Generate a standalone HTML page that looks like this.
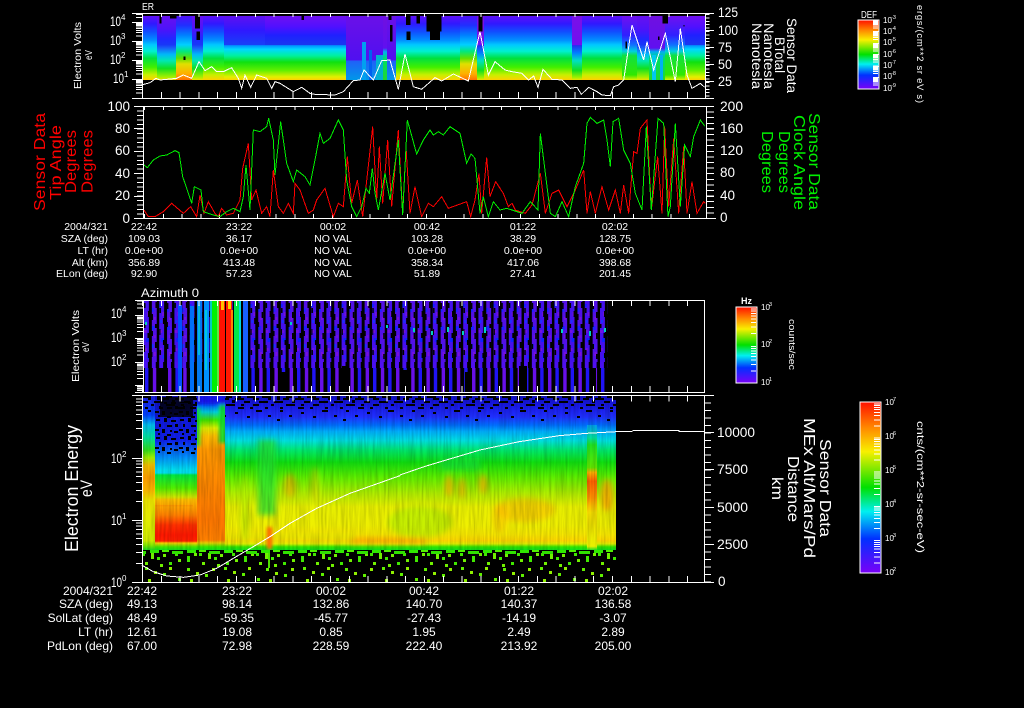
<!DOCTYPE html>
<html><head><meta charset="utf-8"><title>Sensor Data</title>
<style>
html,body{margin:0;padding:0;background:#000;width:1024px;height:708px;overflow:hidden}
svg{display:block;shape-rendering:crispEdges}
text{font-family:"Liberation Sans",sans-serif;fill:#fff}
.t10{font-size:10.5px}.t12{font-size:12px}.m{text-anchor:middle}.e{text-anchor:end}
.ax{font-size:13.5px}.ex{font-size:8px}.sm{font-size:8px}.xs{font-size:5.5px}
.r{fill:#f00}.g{fill:#00f000}
</style></head><body>
<svg width="1024" height="708" viewBox="0 0 1024 708" xmlns="http://www.w3.org/2000/svg">
<defs>
<linearGradient id="g1" x1="0" y1="0" x2="0" y2="1"><stop offset="0" stop-color="#6010f8"/><stop offset=".12" stop-color="#3018ff"/><stop offset=".25" stop-color="#1050ff"/><stop offset=".38" stop-color="#0090ff"/><stop offset=".45" stop-color="#00c8ff"/><stop offset=".55" stop-color="#00f0d0"/><stop offset=".66" stop-color="#00e040"/><stop offset=".8" stop-color="#40f000"/><stop offset=".92" stop-color="#c8f000"/><stop offset="1" stop-color="#ffd000"/></linearGradient>
<linearGradient id="g2" x1="0" y1="0" x2="0" y2="1"><stop offset="0" stop-color="#7010f0"/><stop offset=".17" stop-color="#5010ff"/><stop offset=".3" stop-color="#2020ff"/><stop offset=".45" stop-color="#1838f0"/><stop offset=".46" stop-color="#0090ff"/><stop offset=".52" stop-color="#00d8ff"/><stop offset=".62" stop-color="#00f0a0"/><stop offset=".72" stop-color="#10e010"/><stop offset=".85" stop-color="#60f000"/><stop offset=".95" stop-color="#e0f000"/><stop offset="1" stop-color="#ffd000"/></linearGradient>
<linearGradient id="g3" x1="0" y1="0" x2="0" y2="1"><stop offset="0" stop-color="#5010f8"/><stop offset=".15" stop-color="#2030ff"/><stop offset=".3" stop-color="#0080ff"/><stop offset=".45" stop-color="#00d0ff"/><stop offset=".55" stop-color="#00e880"/><stop offset=".66" stop-color="#60e000"/><stop offset=".75" stop-color="#e0e000"/><stop offset=".9" stop-color="#ffb000"/><stop offset="1" stop-color="#ff7000"/></linearGradient>
<linearGradient id="g4" x1="0" y1="0" x2="0" y2="1"><stop offset="0" stop-color="#6a10e8"/><stop offset=".69" stop-color="#5010f0"/><stop offset=".7" stop-color="#2060f8"/><stop offset="1" stop-color="#0098e8"/></linearGradient>
<linearGradient id="g5" x1="0" y1="0" x2="0" y2="1"><stop offset="0" stop-color="#6810f0"/><stop offset=".22" stop-color="#4a14fa"/><stop offset=".36" stop-color="#2028ff"/><stop offset=".45" stop-color="#1838f8"/><stop offset=".5" stop-color="#1860f8"/><stop offset=".6" stop-color="#00b8f8"/><stop offset=".7" stop-color="#00e8b0"/><stop offset=".82" stop-color="#10e020"/><stop offset=".95" stop-color="#a0f000"/><stop offset="1" stop-color="#f0e000"/></linearGradient>
<linearGradient id="g9" x1="0" y1="0" x2="0" y2="1"><stop offset="0" stop-color="#7a10e8"/><stop offset=".45" stop-color="#7010f0"/><stop offset=".46" stop-color="#2030f0"/><stop offset=".58" stop-color="#0080ff"/><stop offset=".7" stop-color="#00e0c0"/><stop offset=".85" stop-color="#10e020"/><stop offset=".96" stop-color="#a0f000"/><stop offset="1" stop-color="#f0e000"/></linearGradient>
<linearGradient id="g6" x1="0" y1="0" x2="0" y2="1"><stop offset="0" stop-color="#6010f0"/><stop offset=".22" stop-color="#3018ff"/><stop offset=".45" stop-color="#1840f8"/><stop offset=".46" stop-color="#0090ff"/><stop offset=".52" stop-color="#00d8ff"/><stop offset=".62" stop-color="#00f0a0"/><stop offset=".72" stop-color="#10e010"/><stop offset=".85" stop-color="#60f000"/><stop offset=".95" stop-color="#e0f000"/><stop offset="1" stop-color="#ffd000"/></linearGradient>
<linearGradient id="g7" x1="0" y1="0" x2="0" y2="1"><stop offset="0" stop-color="#7010f0"/><stop offset=".3" stop-color="#3020ff"/><stop offset=".45" stop-color="#1070ff"/><stop offset=".55" stop-color="#00d0e0"/><stop offset=".62" stop-color="#10e040"/><stop offset=".92" stop-color="#30e800"/><stop offset="1" stop-color="#e0f000"/></linearGradient>
<linearGradient id="g8" x1="0" y1="0" x2="0" y2="1"><stop offset="0" stop-color="#7010e0"/><stop offset=".5" stop-color="#6010f0"/><stop offset=".56" stop-color="#00b0f0"/><stop offset=".68" stop-color="#00e060"/><stop offset="1" stop-color="#20d830"/></linearGradient>

<linearGradient id="m" x1="0" y1="0" x2="0" y2="1"><stop offset="0" stop-color="#1010c0"/><stop offset=".06" stop-color="#1818e8"/><stop offset=".136" stop-color="#2030ff"/><stop offset=".19" stop-color="#0070ff"/><stop offset=".23" stop-color="#00b0ff"/><stop offset=".29" stop-color="#00e0e0"/><stop offset=".35" stop-color="#00e870"/><stop offset=".43" stop-color="#10e010"/><stop offset=".53" stop-color="#60f000"/><stop offset=".63" stop-color="#b0f000"/><stop offset=".72" stop-color="#e8f000"/><stop offset=".84" stop-color="#f0f000"/><stop offset=".9" stop-color="#f8e800"/><stop offset=".94" stop-color="#ffd800"/><stop offset=".96" stop-color="#e0f000"/><stop offset=".98" stop-color="#30e800"/><stop offset="1" stop-color="#10e020"/></linearGradient>
<linearGradient id="l" x1="0" y1="0" x2="0" y2="1"><stop offset="0" stop-color="#2020e0"/><stop offset=".123" stop-color="#0040ff"/><stop offset=".188" stop-color="#00c0f0"/><stop offset=".266" stop-color="#00e0a0"/><stop offset=".35" stop-color="#30e020"/><stop offset=".4" stop-color="#a0f000"/><stop offset=".448" stop-color="#f0c000"/><stop offset=".532" stop-color="#ffa000"/><stop offset=".61" stop-color="#ffb800"/><stop offset=".675" stop-color="#f0e800"/><stop offset=".94" stop-color="#d0f000"/><stop offset=".97" stop-color="#80f000"/><stop offset="1" stop-color="#20e020"/></linearGradient>
<linearGradient id="q" x1="0" y1="0" x2="0" y2="1"><stop offset="0" stop-color="#1010c0"/><stop offset=".286" stop-color="#1020f0"/><stop offset=".396" stop-color="#0090ff"/><stop offset=".48" stop-color="#00e0f0"/><stop offset=".5" stop-color="#00e0f0"/><stop offset=".513" stop-color="#00e840"/><stop offset=".597" stop-color="#50f000"/><stop offset=".656" stop-color="#d0e800"/><stop offset=".675" stop-color="#ffc000"/><stop offset=".773" stop-color="#ff8000"/><stop offset=".838" stop-color="#ff3000"/><stop offset=".903" stop-color="#ff1800"/><stop offset=".942" stop-color="#ff2000"/><stop offset=".955" stop-color="#f8d000"/><stop offset=".98" stop-color="#40e800"/><stop offset="1" stop-color="#10e020"/></linearGradient>
<linearGradient id="p" x1="0" y1="0" x2="0" y2="1"><stop offset="0" stop-color="#1010e0"/><stop offset=".058" stop-color="#0060ff"/><stop offset=".104" stop-color="#00d0e0"/><stop offset=".156" stop-color="#40e800"/><stop offset=".208" stop-color="#e0f000"/><stop offset=".26" stop-color="#ffc000"/><stop offset=".35" stop-color="#ff9800"/><stop offset=".805" stop-color="#ff7800"/><stop offset=".935" stop-color="#ff8000"/><stop offset=".955" stop-color="#e0d000"/><stop offset=".98" stop-color="#30e800"/><stop offset="1" stop-color="#10e020"/></linearGradient>
<linearGradient id="sp" x1="0" y1="0" x2="0" y2="1"><stop offset="0" stop-color="#00a0f0"/><stop offset=".1" stop-color="#00e0a0"/><stop offset=".16" stop-color="#20e020"/><stop offset=".34" stop-color="#60e800"/><stop offset=".38" stop-color="#ffb000"/><stop offset=".45" stop-color="#ff6000"/><stop offset=".58" stop-color="#ff9000"/><stop offset=".7" stop-color="#f8e000"/><stop offset=".97" stop-color="#e8f000"/><stop offset="1" stop-color="#20e020"/></linearGradient>
<linearGradient id="cb" x1="0" y1="0" x2="0" y2="1"><stop offset="0" stop-color="#ff1000"/><stop offset=".15" stop-color="#ff8800"/><stop offset=".29" stop-color="#f8f000"/><stop offset=".5" stop-color="#00e000"/><stop offset=".64" stop-color="#00f0f0"/><stop offset=".8" stop-color="#0030ff"/><stop offset="1" stop-color="#7a00f8"/></linearGradient>

<filter id="noise" x="0" y="0" width="100%" height="100%"><feTurbulence type="fractalNoise" baseFrequency="0.5 0.03" numOctaves="2" seed="4"/><feColorMatrix values="0 0 0 0 0  0 0 0 0 0  0 0 0 0 0  1.6 0 0 0 -.55"/></filter>
<filter id="bl" x="-50%" y="-50%" width="200%" height="200%"><feGaussianBlur stdDeviation="3"/></filter>
<filter id="bl2" x="-50%" y="-50%" width="200%" height="200%"><feGaussianBlur stdDeviation="1.5"/></filter>

<pattern id="st" patternUnits="userSpaceOnUse" x="144" y="300" width="15.2" height="92">
<rect x="0" y="0" width="5" height="62" fill="#4410ec"/><rect x="0" y="62" width="4" height="6" fill="#4810f0"/>
<rect x="1" y="68" width="3.5" height="24" fill="#2014f4"/>
<rect x="0" y="4" width="2" height="3" fill="#1020ff"/><rect x="3" y="12" width="2" height="4" fill="#7010e0"/><rect x="1" y="20" width="2" height="3" fill="#1a30ff"/><rect x="0" y="30" width="3" height="3" fill="#7010e0"/><rect x="2" y="38" width="3" height="4" fill="#1020ff"/><rect x="1" y="48" width="2" height="3" fill="#7010e0"/><rect x="3" y="55" width="2" height="4" fill="#2020ff"/>
<rect x="7.6" y="0" width="5" height="62" fill="#5210e6"/><rect x="8" y="62" width="4" height="6" fill="#5010f0"/>
<rect x="8.6" y="68" width="3.5" height="24" fill="#6810e8"/>
<rect x="8" y="8" width="2" height="4" fill="#2020ff"/><rect x="10" y="17" width="2" height="3" fill="#7a10dc"/><rect x="8" y="26" width="3" height="4" fill="#1a20ff"/><rect x="10" y="35" width="2" height="3" fill="#7010e0"/><rect x="8" y="44" width="2" height="4" fill="#1830ff"/><rect x="10" y="52" width="2" height="4" fill="#7a10dc"/>
</pattern>
<pattern id="nt" patternUnits="userSpaceOnUse" x="144" y="300" width="30.4" height="62">
<rect x="0" y="3" width="1.5" height="5" fill="#000"/><rect x="4" y="11" width="1.5" height="6" fill="#000"/><rect x="0" y="24" width="1.5" height="4" fill="#000"/><rect x="3.5" y="33" width="2" height="5" fill="#000"/><rect x="0" y="45" width="1" height="7" fill="#000"/><rect x="4" y="53" width="1.5" height="5" fill="#000"/>
<rect x="7.6" y="14" width="1.5" height="6" fill="#000"/><rect x="11.5" y="2" width="1.5" height="6" fill="#000"/><rect x="7.6" y="31" width="1.5" height="5" fill="#000"/><rect x="11" y="24" width="2" height="4" fill="#000"/><rect x="11" y="42" width="2" height="6" fill="#000"/><rect x="7.6" y="52" width="1" height="5" fill="#000"/>
<rect x="15.2" y="8" width="1.5" height="5" fill="#000"/><rect x="19" y="18" width="1.5" height="6" fill="#000"/><rect x="15.2" y="29" width="1" height="6" fill="#000"/><rect x="19" y="40" width="1.5" height="5" fill="#000"/><rect x="15.2" y="50" width="1.5" height="5" fill="#000"/>
<rect x="22.8" y="3" width="1.5" height="6" fill="#000"/><rect x="26.5" y="12" width="1.5" height="6" fill="#000"/><rect x="22.8" y="22" width="1" height="5" fill="#000"/><rect x="26.5" y="33" width="1.5" height="6" fill="#000"/><rect x="22.8" y="44" width="1.5" height="5" fill="#000"/><rect x="26.5" y="54" width="1.5" height="5" fill="#000"/>
</pattern>

<pattern id="sk1" patternUnits="userSpaceOnUse" x="142" y="396" width="60" height="14">
<rect x="0" y="0" width="9" height="2" fill="#000"/><rect x="15" y="0" width="3" height="4" fill="#000"/><rect x="24" y="0" width="6" height="2" fill="#000"/><rect x="36" y="0" width="3" height="2" fill="#000"/><rect x="45" y="0" width="9" height="2" fill="#000"/>
<rect x="6" y="2" width="3" height="2" fill="#000"/><rect x="21" y="2" width="6" height="2" fill="#000"/><rect x="33" y="2" width="9" height="2" fill="#000"/><rect x="51" y="2" width="6" height="2" fill="#000"/>
<rect x="0" y="5" width="6" height="2" fill="#000"/><rect x="12" y="5" width="9" height="2" fill="#000"/><rect x="30" y="4" width="3" height="3" fill="#000"/><rect x="42" y="5" width="6" height="2" fill="#000"/><rect x="57" y="5" width="3" height="2" fill="#000"/>
<rect x="9" y="8" width="3" height="2" fill="#000"/><rect x="24" y="8" width="9" height="2" fill="#000"/><rect x="39" y="8" width="3" height="2" fill="#000"/><rect x="51" y="8" width="6" height="2" fill="#000"/>
<rect x="3" y="11" width="3" height="2" fill="#000"/><rect x="18" y="11" width="3" height="2" fill="#000"/><rect x="36" y="11" width="6" height="2" fill="#000"/><rect x="48" y="11" width="3" height="2" fill="#000"/>
</pattern>
<pattern id="sk3" patternUnits="userSpaceOnUse" x="142" y="410" width="66" height="12">
<rect x="6" y="0" width="3" height="2" fill="#000"/><rect x="27" y="2" width="3" height="2" fill="#000"/><rect x="48" y="0" width="6" height="2" fill="#000"/><rect x="15" y="5" width="3" height="2" fill="#000"/><rect x="39" y="6" width="3" height="2" fill="#000"/><rect x="60" y="5" width="3" height="2" fill="#000"/><rect x="3" y="9" width="3" height="2" fill="#000"/>
</pattern>
<pattern id="sk2" patternUnits="userSpaceOnUse" x="155" y="400" width="24" height="18">
<rect x="1" y="1" width="4" height="2" fill="#000"/><rect x="9" y="0" width="3" height="4" fill="#000"/><rect x="16" y="2" width="5" height="2" fill="#000"/><rect x="4" y="6" width="2" height="3" fill="#000"/><rect x="12" y="7" width="5" height="2" fill="#000"/><rect x="20" y="6" width="3" height="3" fill="#000"/><rect x="0" y="11" width="4" height="2" fill="#000"/><rect x="7" y="11" width="3" height="4" fill="#000"/><rect x="15" y="12" width="2" height="2" fill="#000"/><rect x="19" y="13" width="4" height="2" fill="#000"/><rect x="3" y="15" width="2" height="2" fill="#000"/><rect x="12" y="16" width="4" height="2" fill="#000"/>
</pattern>

<pattern id="gs1" patternUnits="userSpaceOnUse" x="142" y="553" width="57" height="14">
<g fill="#40e800"><rect x="0" y="0" width="3" height="3"/><rect x="33" y="0" width="3" height="3"/><rect x="15" y="4" width="3" height="3"/><rect x="45" y="3" width="3" height="6"/><rect x="27" y="9" width="3" height="3"/></g>
<g fill="#70f000"><rect x="9" y="0" width="3" height="6"/><rect x="21" y="1" width="3" height="3"/><rect x="52" y="0" width="3" height="3"/><rect x="36" y="6" width="3" height="3"/><rect x="3" y="9" width="3" height="3"/><rect x="18" y="11" width="3" height="3"/></g>
</pattern>
<pattern id="gs3" patternUnits="userSpaceOnUse" x="142" y="567" width="79" height="15">
<g fill="#60f000"><rect x="3" y="0" width="3" height="3"/><rect x="45" y="1" width="3" height="3"/><rect x="21" y="6" width="3" height="3"/><rect x="63" y="7" width="3" height="3"/><rect x="36" y="11" width="3" height="3"/></g>
<g fill="#90f000"><rect x="27" y="0" width="3" height="3"/><rect x="70" y="1" width="3" height="3"/><rect x="12" y="4" width="3" height="3"/><rect x="54" y="5" width="3" height="3"/><rect x="6" y="12" width="3" height="3"/><rect x="48" y="12" width="3" height="3"/></g>
</pattern>
<pattern id="gs2" patternUnits="userSpaceOnUse" x="150" y="550" width="37" height="5">
<rect x="0" y="0" width="9" height="3" fill="#30e800"/><rect x="12" y="0" width="7" height="2" fill="#50f000"/><rect x="22" y="1" width="11" height="3" fill="#30e000"/>
</pattern>

<path id="d19" d="M136-5.7H142M136-9.1H142M136-11.4H142M136-13.3H142M136-14.8H142M136-16.1H142M136-17.2H142M136-18.1H142"/>
<path id="d23" d="M137-7.1H143M137-11.2H143M137-14.1H143M137-16.4H143M137-18.3H143M137-19.9H143M137-21.2H143M137-22.4H143"/>
<path id="d62" d="M136-18.7H142M136-29.6H142M136-37.3H142M136-43.3H142M136-48.2H142M136-52.4H142M136-56H142M136-59.2H142"/>
<path id="b11" d="M-5-3.4H0M-5-5.4H0M-5-6.8H0M-5-7.9H0M-5-8.8H0M-5-9.5H0M-5-10.2H0M-5-10.8H0"/>
<path id="b37" d="M-5-11.3H0M-5-17.9H0M-5-22.6H0M-5-26.2H0M-5-29.2H0M-5-31.7H0M-5-33.9H0M-5-35.8H0"/>
<path id="b34" d="M-6-10.2H0M-6-16.2H0M-6-20.5H0M-6-23.8H0M-6-26.5H0M-6-28.7H0M-6-30.7H0M-6-32.4H0"/>
</defs>

<rect width="1024" height="708" fill="#000"/>

<!-- PANEL 1 spectrogram -->
<g>
<rect x="142" y="16" width="15" height="64" fill="url(#g1)"/>
<rect x="157" y="16" width="19" height="64" fill="url(#g5)"/>
<rect x="176" y="16" width="16" height="64" fill="url(#g3)"/>
<rect x="192" y="16" width="11" height="64" fill="url(#g5)"/>
<rect x="203" y="16" width="21" height="64" fill="url(#g1)"/>
<rect x="224" y="16" width="41" height="64" fill="url(#g6)"/>
<rect x="265" y="16" width="81" height="64" fill="url(#g2)"/>
<rect x="346" y="16" width="37" height="64" fill="url(#g4)"/>
<rect x="362" y="42" width="4" height="38" fill="#00a0f0"/><rect x="369" y="50" width="3" height="30" fill="#0060f0"/><rect x="376" y="55" width="7" height="25" fill="#00b0d0"/>
<rect x="383" y="16" width="4" height="64" fill="url(#g8)"/>
<rect x="387" y="16" width="9" height="64" fill="url(#g4)"/>
<rect x="396" y="16" width="64" height="64" fill="url(#g1)"/>
<rect x="460" y="16" width="17" height="64" fill="url(#g3)"/>
<rect x="477" y="16" width="7" height="64" fill="url(#g9)"/>
<rect x="484" y="16" width="88" height="64" fill="url(#g1)"/>
<rect x="572" y="16" width="10" height="64" fill="url(#g9)"/>
<rect x="582" y="16" width="40" height="64" fill="url(#g1)"/>
<rect x="622" y="16" width="15" height="64" fill="url(#g7)"/>
<rect x="637" y="16" width="12" height="64" fill="url(#g5)"/>
<rect x="649" y="16" width="16" height="64" fill="url(#g8)"/>
<rect x="665" y="16" width="20" height="64" fill="url(#g7)"/>
<rect x="685" y="16" width="20" height="64" fill="url(#g2)"/>
<rect x="652" y="55" width="4" height="25" fill="#00c8f0"/><rect x="660" y="55" width="3" height="25" fill="#00b0f0"/>
</g>
<g transform="scale(.33333)" fill="#000">
<rect x="478" y="48" width="6" height="22"/><rect x="510" y="48" width="20" height="7"/><rect x="585" y="48" width="15" height="37"/><rect x="590" y="95" width="10" height="25"/><rect x="905" y="48" width="7" height="12"/><rect x="1165" y="48" width="10" height="12"/><rect x="1170" y="75" width="8" height="50"/><rect x="1218" y="48" width="14" height="27"/><rect x="1220" y="95" width="12" height="25"/><rect x="1250" y="48" width="10" height="22"/><rect x="1280" y="48" width="45" height="47"/><rect x="1290" y="95" width="30" height="25"/><rect x="1435" y="48" width="12" height="47"/><rect x="550" y="170" width="6" height="10"/>
<rect x="1988" y="48" width="16" height="22"/><rect x="1974" y="110" width="5" height="10"/><rect x="1876" y="125" width="5" height="20"/><rect x="2051" y="75" width="3" height="5"/>
</g>
<!-- panel 1 frame -->
<g stroke="#fff" stroke-width="1" fill="none">
<path d="M132 13.5H714M132 98.5H714M142.5 13V99M705.5 13V99"/>
<path d="M132 22.5H142M132 41.5H142M132 60.5H142M132 79.5H142M136 17.5H142M136 14.5H142M705 30.5H714M705 47.5H714M705 64.5H714M705 81.5H714"/>
<use href="#d19" transform="translate(0,41.7)"/><use href="#d19" transform="translate(0,60.7)"/><use href="#d19" transform="translate(0,79.7)"/><use href="#d19" transform="translate(0,98.7)"/>
</g>
<line x1="142" y1="95" x2="705" y2="95" stroke="#fff" stroke-width="6" stroke-dasharray="1 17.8"/>
<line x1="142" y1="15.5" x2="705" y2="15.5" stroke="#fff" stroke-width="3" stroke-dasharray="1 17.8"/>
<line x1="707.5" y1="14" x2="707.5" y2="98" stroke="#fff" stroke-width="4" stroke-dasharray="1 2.4"/>
<polyline transform="scale(.33333)" fill="none" stroke="#fff" stroke-width="3" points="425,255 450,248 468,235 480,240 530,235 550,225 575,235 597,185 615,212 635,200 650,215 670,215 695,203 715,235 725,265 735,225 752,262 770,225 800,235 815,265 825,245 840,250 880,275 905,262 930,280 945,283 1005,285 1030,275 1060,242 1080,240 1092,210 1120,240 1145,182 1170,180 1195,268 1215,162 1240,260 1265,268 1305,233 1325,243 1360,222 1405,243 1440,95 1465,225 1485,185 1515,210 1536,215"/>
<polyline transform="translate(512,0) scale(.33333)" fill="none" stroke="#fff" stroke-width="3" points="0,215 30,220 50,240 65,228 78,262 93,208 120,238 150,240 175,265 195,262 208,283 230,262 255,275 270,285 295,287 305,260 320,255 335,240 360,75 395,180 405,125 425,210 460,100 490,245 505,85 525,225 540,265 565,250 578,262"/>

<!-- PANEL 2 -->
<g stroke="#fff" fill="none">
<path d="M134 106.5H714M134 218.5H716M143.5 106V219M706.5 106V219"/>
<path d="M134 128.5H143M134 151.5H143M134 173.5H143M134 196.5H143M706 128.5H714M706 151.5H714M706 173.5H714M706 196.5H714"/>
</g>
<line x1="140" y1="106" x2="140" y2="218" stroke="#fff" stroke-width="6" stroke-dasharray="1 3.48"/>
<line x1="710" y1="106" x2="710" y2="218" stroke="#fff" stroke-width="8" stroke-dasharray="1 4.6"/>
<line x1="144" y1="108" x2="706" y2="108" stroke="#fff" stroke-width="4" stroke-dasharray="1 17.8"/>
<line x1="144" y1="216" x2="706" y2="216" stroke="#fff" stroke-width="4" stroke-dasharray="1 17.8"/>
<polyline transform="scale(.33333)" fill="none" stroke="#f00" stroke-width="3" points="432,630 445,650 465,650 490,635 515,610 550,640 572,620 590,650 600,585 612,640 625,605 645,640 655,650 665,625 680,645 700,640 720,600 728,505 745,430 755,600 768,570 785,640 800,620 810,650 820,510 835,620 850,640 865,610 880,640 885,550 900,570 925,640 940,630 950,600 975,565 1000,650 1015,610 1030,620 1042,470 1055,610 1072,540 1088,650 1118,380 1130,600 1138,440 1148,610 1163,420 1175,620 1195,390 1208,640 1218,440 1230,640 1245,560 1265,650 1285,610 1300,620 1325,590 1345,625 1400,605 1412,650 1425,600 1437,520 1445,640 1460,472 1470,590 1487,545 1510,580 1525,620 1536,610"/>
<polyline transform="translate(512,0) scale(.33333)" fill="none" stroke="#f00" stroke-width="3" points="0,610 10,630 40,640 60,615 85,520 100,640 120,580 140,570 165,620 190,570 215,510 225,640 235,575 250,640 270,560 290,630 310,570 325,640 335,555 350,640 365,455 375,460 385,385 405,360 418,630 437,470 450,640 458,380 470,620 485,415 500,640 515,440 525,640 540,545 555,640 575,605 580,610"/>
<polyline transform="scale(.33333)" fill="none" stroke="#00f000" stroke-width="3" points="432,495 442,503 460,480 480,468 500,465 525,452 537,458 548,530 555,550 575,610 583,560 603,570 610,635 640,645 660,650 680,635 700,625 720,635 730,590 738,495 750,630 760,390 780,395 800,380 806,355 820,420 825,525 842,365 860,490 880,545 890,510 915,530 930,555 945,480 960,400 970,430 990,415 1015,360 1030,390 1040,540 1055,620 1070,650 1085,620 1098,565 1108,580 1117,505 1125,580 1135,630 1155,520 1170,600 1195,420 1208,645 1222,360 1250,462 1270,420 1290,390 1300,405 1315,395 1330,405 1350,380 1380,400 1400,490 1413,462 1425,475 1440,640 1450,590 1465,650 1480,605 1500,630 1520,625 1536,630"/>
<polyline transform="translate(512,0) scale(.33333)" fill="none" stroke="#00f000" stroke-width="3" points="0,630 30,640 55,605 78,630 85,400 95,480 115,640 130,650 150,605 170,650 190,560 215,490 225,370 235,352 255,370 275,360 285,420 295,500 303,365 320,355 335,450 355,490 370,580 390,630 403,380 418,630 438,355 455,370 468,650 475,620 490,370 505,620 518,435 535,470 545,410 565,360 578,378"/>

<!-- PANEL 3 -->
<rect x="144" y="300" width="464" height="92" fill="url(#st)"/>
<rect x="144" y="300" width="464" height="62" fill="url(#nt)"/>
<g fill="#000">
<rect x="159" y="368" width="7" height="24"/><rect x="281" y="372" width="6" height="20"/><rect x="342" y="366" width="6" height="26"/><rect x="403" y="370" width="6" height="22"/><rect x="519" y="366" width="8" height="26"/><rect x="465" y="372" width="5" height="20"/><rect x="590" y="368" width="6" height="24"/>
</g>
<g>
<rect x="197" y="300" width="5" height="92" fill="#0078f0"/><rect x="198" y="305" width="2" height="50" fill="#00b8e0"/>
<rect x="204" y="300" width="5" height="92" fill="#0090ff"/><rect x="205" y="310" width="2" height="60" fill="#00c8e0"/>
<rect x="210" y="300" width="2" height="92" fill="#00c8c0"/><rect x="212" y="300" width="5" height="92" fill="#00f000"/><rect x="217" y="300" width="2" height="92" fill="#60e040"/>
<rect x="219" y="300" width="6" height="92" fill="#ff1000"/><rect x="221" y="300" width="3" height="10" fill="#ffc000"/>
<rect x="225" y="300" width="1" height="92" fill="#000"/>
<rect x="226" y="300" width="6" height="92" fill="#ff1800"/><rect x="228" y="300" width="3" height="9" fill="#f8d000"/><rect x="231" y="310" width="2" height="82" fill="#ff8000"/>
<rect x="234" y="300" width="5" height="92" fill="#00e848"/><rect x="239" y="300" width="2" height="92" fill="#00d8e0"/>
<rect x="243" y="300" width="5" height="92" fill="#1860ff"/>
<rect x="178" y="305" width="4" height="87" fill="#0050ff"/><rect x="190" y="306" width="4" height="86" fill="#0070f8"/>
</g>
<g fill="#00d0c0">
<rect x="145" y="322" width="2" height="3"/><rect x="413" y="328" width="2" height="4"/><rect x="431" y="331" width="2" height="4"/><rect x="447" y="327" width="2" height="5"/><rect x="462" y="331" width="2" height="4"/><rect x="484" y="327" width="2" height="6"/><rect x="561" y="329" width="2" height="4"/><rect x="589" y="331" width="2" height="5"/><rect x="604" y="328" width="2" height="4"/><rect x="290" y="322" width="2" height="3"/><rect x="386" y="325" width="2" height="3"/>
</g>
<g stroke="#fff" fill="none">
<path d="M135 300.5H704.5M135 392.5H704.5M143.5 300V393M704.5 300V393"/>
<path d="M135 315.5H143M135 338.5H143M135 362.5H143M135 385.5H143M137 307.9H143M137 303.8H143M137 300.9H143M137 390.7H143M137 389.1H143M137 387.8H143M137 386.6H143"/>
<use href="#d23" transform="translate(0,338.5)"/><use href="#d23" transform="translate(0,362)"/><use href="#d23" transform="translate(0,385.5)"/>
</g>
<line x1="142" y1="303" x2="704" y2="303" stroke="#fff" stroke-width="6" stroke-dasharray="1 17.8"/>
<line x1="142" y1="389" x2="704" y2="389" stroke="#fff" stroke-width="6" stroke-dasharray="1 17.8"/>

<!-- PANEL 4 -->
<rect x="225" y="396" width="391" height="154" fill="url(#m)"/>
<svg x="142" y="396" width="474" height="154" viewBox="142 396 474 154">
<g filter="url(#bl)">
<rect x="258" y="440" width="18" height="75" fill="#20e030" opacity=".75"/>
<ellipse cx="290" cy="486" rx="6" ry="12" fill="#ffb000" opacity=".6"/>
<ellipse cx="245" cy="510" rx="4" ry="35" fill="#b0f000" opacity=".6"/>
<ellipse cx="315" cy="485" rx="4" ry="18" fill="#ffd000" opacity=".4"/>
<ellipse cx="420" cy="522" rx="32" ry="16" fill="#a0f000" opacity=".5"/>
<ellipse cx="449" cy="486" rx="4" ry="11" fill="#ff9000" opacity=".65"/>
<ellipse cx="462" cy="488" rx="3" ry="11" fill="#ff9000" opacity=".65"/>
<ellipse cx="483" cy="484" rx="4" ry="10" fill="#ff9000" opacity=".65"/>
<ellipse cx="525" cy="510" rx="30" ry="12" fill="#ffb000" opacity=".45"/>
<ellipse cx="500" cy="518" rx="8" ry="14" fill="#ffb000" opacity=".4"/>
<ellipse cx="607" cy="495" rx="6" ry="16" fill="#ff9000" opacity=".7"/>
<rect x="440" y="458" width="40" height="12" fill="#10e040" opacity=".6"/>
<rect x="350" y="539" width="75" height="4" fill="#ff9800" opacity=".9"/>
<rect x="225" y="535" width="130" height="5" fill="#d8f000" opacity=".6"/>
</g>
</svg>
<rect x="587" y="425" width="10" height="125" fill="url(#sp)"/>
<rect x="142" y="396" width="13" height="154" fill="url(#l)"/>
<rect x="155" y="396" width="42" height="154" fill="url(#q)"/>
<rect x="197" y="396" width="28" height="154" fill="url(#p)"/>
<svg x="197" y="396" width="28" height="154" viewBox="197 396 28 154">
<g filter="url(#bl2)">
<rect x="194" y="408" width="6" height="38" fill="#10e030" opacity=".85"/>
<rect x="219" y="405" width="9" height="38" fill="#10e030" opacity=".9"/>
<rect x="194" y="395" width="34" height="9" fill="#1818f0"/>
</g>
</svg>
<rect x="155" y="505" width="38" height="1.5" fill="#ff9a00"/>
<rect x="142" y="396" width="474" height="154" filter="url(#noise)" opacity=".22"/>
<rect x="142" y="396" width="55" height="14" fill="url(#sk1)"/>
<rect x="225" y="396" width="391" height="14" fill="url(#sk1)"/>
<rect x="225" y="410" width="391" height="12" fill="url(#sk3)"/>
<rect x="142" y="410" width="13" height="8" fill="url(#sk3)"/>
<rect x="155" y="402" width="42" height="52" fill="url(#sk2)"/>
<rect x="160" y="397" width="33" height="20" fill="#000" opacity=".8"/>
<svg x="264" y="522" width="12" height="28" viewBox="264 522 12 28"><rect x="267" y="527" width="5" height="22" fill="#ff6800" filter="url(#bl2)"/></svg>
<rect x="142" y="553" width="474" height="14" fill="url(#gs1)"/>
<rect x="142" y="567" width="474" height="15" fill="url(#gs3)"/>
<rect x="142" y="550" width="474" height="5" fill="url(#gs2)"/>
<rect x="268" y="553" width="2" height="15" fill="#50e000"/>
<polyline transform="translate(0,290) scale(.33333)" fill="none" stroke="#fff" stroke-width="3" points="425,825 460,845 500,858 550,862 600,855 650,835 700,805 760,770 810,740 870,700 950,655 1050,610 1200,557"/>
<polyline fill="none" stroke="#fff" stroke-width="1" points="400,475 424,466.7 452,458.3 480,450 519,441.7 559,435.7 587,433.3 616,431.7 631,431.7 633,430.7 679,430.7 679,431.7 704,431.7"/>
<g stroke="#fff" fill="none">
<path d="M132 395.5H714M132 582.5H714M142.5 395V583M704.5 395V583"/>
<path d="M132 458.5H142M132 520.5H142M704 432.5H714M704 469.5H714M704 507.5H714M704 544.5H714"/>
<use href="#d62" transform="translate(0,582)"/><use href="#d62" transform="translate(0,520)"/><use href="#d62" transform="translate(0,458)"/>
</g>
<line x1="708" y1="395" x2="708" y2="582" stroke="#fff" stroke-width="6" stroke-dasharray="1 6.46"/>
<line x1="142" y1="398.5" x2="704" y2="398.5" stroke="#fff" stroke-width="6" stroke-dasharray="1 17.8"/>
<line x1="142" y1="579" x2="704" y2="579" stroke="#fff" stroke-width="6" stroke-dasharray="1 17.8"/>

<!-- Colour bars -->
<rect x="858" y="20" width="21" height="69" fill="url(#cb)" stroke="#fff"/>
<g stroke="#fff" fill="none"><path d="M873 31.5H879M873 43.5H879M873 54.5H879M873 66.5H879M873 77.5H879"/>
<use href="#b11" transform="translate(878,31.4)"/><use href="#b11" transform="translate(878,42.8)"/><use href="#b11" transform="translate(878,54.2)"/><use href="#b11" transform="translate(878,65.6)"/><use href="#b11" transform="translate(878,77)"/><use href="#b11" transform="translate(878,88.4)"/></g>
<rect x="736" y="307" width="21" height="76" fill="url(#cb)" stroke="#fff"/>
<g stroke="#fff" fill="none"><use href="#b37" transform="translate(756,345)"/><use href="#b37" transform="translate(756,382.5)"/></g>
<rect x="860" y="402" width="21" height="171" fill="url(#cb)" stroke="#fff"/>
<g stroke="#fff" fill="none"><use href="#b34" transform="translate(880,436.2)"/><use href="#b34" transform="translate(880,470.4)"/><use href="#b34" transform="translate(880,504.6)"/><use href="#b34" transform="translate(880,538.8)"/><use href="#b34" transform="translate(880,573)"/></g>

<!-- TEXT: titles -->
<text x="142" y="10" font-size="10.5" textLength="12" lengthAdjust="spacingAndGlyphs">ER</text>
<text x="141" y="297" font-size="11.5" textLength="58" lengthAdjust="spacingAndGlyphs">Azimuth 0</text>
<text x="861" y="18" font-size="10" textLength="16" lengthAdjust="spacingAndGlyphs">DEF</text>
<text x="741" y="304" font-size="9" font-weight="bold" textLength="11" lengthAdjust="spacingAndGlyphs">Hz</text>

<!-- left y tick labels panel 1 -->
<g class="ax">
<text class="ax" x="110" y="26" textLength="11" lengthAdjust="spacingAndGlyphs">10</text><text class="ex" x="121" y="20">4</text>
<text class="ax" x="110" y="45" textLength="11" lengthAdjust="spacingAndGlyphs">10</text><text class="ex" x="121" y="39">3</text>
<text class="ax" x="110" y="64" textLength="11" lengthAdjust="spacingAndGlyphs">10</text><text class="ex" x="121" y="58">2</text>
<text class="ax" x="113" y="83" textLength="11" lengthAdjust="spacingAndGlyphs">10</text><text class="ex" x="124" y="77">1</text>
</g>
<!-- right panel 1 -->
<text class="ax" x="718" y="17" textLength="20" lengthAdjust="spacingAndGlyphs">125</text>
<text class="ax" x="718" y="35" textLength="20" lengthAdjust="spacingAndGlyphs">100</text>
<text class="ax" x="718" y="52" textLength="14" lengthAdjust="spacingAndGlyphs">75</text>
<text class="ax" x="718" y="69" textLength="14" lengthAdjust="spacingAndGlyphs">50</text>
<text class="ax" x="718" y="86" textLength="14" lengthAdjust="spacingAndGlyphs">25</text>
<!-- left panel 2 -->
<text class="ax e" x="130" y="111">100</text><text class="ax e" x="130" y="133">80</text><text class="ax e" x="130" y="155">60</text><text class="ax e" x="130" y="178">40</text><text class="ax e" x="130" y="200">20</text><text class="ax e" x="130" y="223">0</text>
<!-- right panel 2 -->
<text class="ax" x="720" y="111" textLength="23" lengthAdjust="spacingAndGlyphs">200</text><text class="ax" x="720" y="133" textLength="23" lengthAdjust="spacingAndGlyphs">160</text><text class="ax" x="720" y="155" textLength="23" lengthAdjust="spacingAndGlyphs">120</text><text class="ax" x="720" y="177" textLength="15" lengthAdjust="spacingAndGlyphs">80</text><text class="ax" x="720" y="200" textLength="15" lengthAdjust="spacingAndGlyphs">40</text><text class="ax" x="720" y="222">0</text>
<!-- left panel 3 -->
<text class="ax" x="111" y="318" textLength="11" lengthAdjust="spacingAndGlyphs">10</text><text class="ex" x="122" y="312">4</text>
<text class="ax" x="111" y="342" textLength="11" lengthAdjust="spacingAndGlyphs">10</text><text class="ex" x="122" y="336">3</text>
<text class="ax" x="111" y="366" textLength="11" lengthAdjust="spacingAndGlyphs">10</text><text class="ex" x="122" y="360">2</text>
<!-- left panel 4 -->
<text class="ax" x="111" y="463" textLength="11" lengthAdjust="spacingAndGlyphs">10</text><text class="ex" x="122" y="457">2</text>
<text class="ax" x="111" y="525" textLength="11" lengthAdjust="spacingAndGlyphs">10</text><text class="ex" x="122" y="519">1</text>
<text class="ax" x="111" y="587" textLength="11" lengthAdjust="spacingAndGlyphs">10</text><text class="ex" x="122" y="581">0</text>
<!-- right panel 4 -->
<text class="ax" x="717" y="437" textLength="38" lengthAdjust="spacingAndGlyphs">10000</text><text class="ax" x="717" y="474" textLength="31" lengthAdjust="spacingAndGlyphs">7500</text><text class="ax" x="717" y="512" textLength="31" lengthAdjust="spacingAndGlyphs">5000</text><text class="ax" x="717" y="549" textLength="31" lengthAdjust="spacingAndGlyphs">2500</text><text class="ax" x="718" y="586">0</text>

<!-- colour bar labels -->
<g>
<text class="sm" x="883" y="23">10</text><text class="xs" x="891" y="19">-3</text>
<text class="sm" x="883" y="34">10</text><text class="xs" x="891" y="30">-4</text>
<text class="sm" x="883" y="45">10</text><text class="xs" x="891" y="41">-5</text>
<text class="sm" x="883" y="57">10</text><text class="xs" x="891" y="53">-6</text>
<text class="sm" x="883" y="68">10</text><text class="xs" x="891" y="64">-7</text>
<text class="sm" x="883" y="79">10</text><text class="xs" x="891" y="75">-8</text>
<text class="sm" x="883" y="91">10</text><text class="xs" x="891" y="87">-9</text>
<text class="sm" x="761" y="310">10</text><text class="xs" x="769" y="306">3</text>
<text class="sm" x="761" y="347">10</text><text class="xs" x="769" y="343">2</text>
<text class="sm" x="761" y="385">10</text><text class="xs" x="769" y="381">1</text>
<text class="sm" x="885" y="405">10</text><text class="xs" x="893" y="401">7</text>
<text class="sm" x="885" y="439">10</text><text class="xs" x="893" y="435">6</text>
<text class="sm" x="885" y="473">10</text><text class="xs" x="893" y="469">5</text>
<text class="sm" x="885" y="507">10</text><text class="xs" x="893" y="503">4</text>
<text class="sm" x="885" y="541">10</text><text class="xs" x="893" y="537">3</text>
<text class="sm" x="885" y="575">10</text><text class="xs" x="893" y="571">2</text>
</g>

<!-- rotated labels -->
<g>
<text transform="translate(81,89) rotate(-90)" font-size="10" textLength="67" lengthAdjust="spacingAndGlyphs">Electron Volts</text>
<text transform="translate(92,60) rotate(-90)" font-size="10" textLength="10" lengthAdjust="spacingAndGlyphs">eV</text>
<text transform="translate(79,382) rotate(-90)" font-size="10" textLength="72" lengthAdjust="spacingAndGlyphs">Electron Volts</text>
<text transform="translate(89,352) rotate(-90)" font-size="10" textLength="10" lengthAdjust="spacingAndGlyphs">eV</text>
<text transform="translate(78,552) rotate(-90)" font-size="18" textLength="127" lengthAdjust="spacingAndGlyphs">Electron Energy</text>
<text transform="translate(92,497) rotate(-90)" font-size="17" textLength="17" lengthAdjust="spacingAndGlyphs">eV</text>

<text class="r" transform="translate(45,211) rotate(-90)" font-size="16" textLength="98" lengthAdjust="spacingAndGlyphs">Sensor Data</text>
<text class="r" transform="translate(61,200) rotate(-90)" font-size="16" textLength="75" lengthAdjust="spacingAndGlyphs">Tip Angle</text>
<text class="r" transform="translate(76,193) rotate(-90)" font-size="16" textLength="63" lengthAdjust="spacingAndGlyphs">Degrees</text>
<text class="r" transform="translate(92.5,193) rotate(-90)" font-size="16" textLength="63" lengthAdjust="spacingAndGlyphs">Degrees</text>

<text transform="translate(787,18) rotate(90)" font-size="13.5" textLength="75" lengthAdjust="spacingAndGlyphs">Sensor Data</text>
<text transform="translate(775,37) rotate(90)" font-size="13.5" textLength="36" lengthAdjust="spacingAndGlyphs">BTotal</text>
<text transform="translate(764,23) rotate(90)" font-size="13.5" textLength="66" lengthAdjust="spacingAndGlyphs">Nanotesla</text>
<text transform="translate(752,23) rotate(90)" font-size="13.5" textLength="66" lengthAdjust="spacingAndGlyphs">Nanotesla</text>

<text class="g" transform="translate(809,113) rotate(90)" font-size="16" textLength="97" lengthAdjust="spacingAndGlyphs">Sensor Data</text>
<text class="g" transform="translate(794,115) rotate(90)" font-size="16" textLength="95" lengthAdjust="spacingAndGlyphs">Clock Angle</text>
<text class="g" transform="translate(779,131) rotate(90)" font-size="16" textLength="62" lengthAdjust="spacingAndGlyphs">Degrees</text>
<text class="g" transform="translate(762,131) rotate(90)" font-size="16" textLength="62" lengthAdjust="spacingAndGlyphs">Degrees</text>

<text transform="translate(820,439) rotate(90)" font-size="16" textLength="98" lengthAdjust="spacingAndGlyphs">Sensor Data</text>
<text transform="translate(804,418) rotate(90)" font-size="16" textLength="140" lengthAdjust="spacingAndGlyphs">MEx Alt/Mars/Pd</text>
<text transform="translate(788,456) rotate(90)" font-size="16" textLength="66" lengthAdjust="spacingAndGlyphs">Distance</text>
<text transform="translate(772,477) rotate(90)" font-size="16" textLength="23" lengthAdjust="spacingAndGlyphs">km</text>

<text transform="translate(917,5) rotate(90)" font-size="9.5" textLength="98" lengthAdjust="spacing">ergs/(cm**2 sr eV s)</text>
<text transform="translate(789,319) rotate(90)" font-size="9" textLength="51" lengthAdjust="spacingAndGlyphs">counts/sec</text>
<text transform="translate(917,421) rotate(90)" font-size="10" textLength="132" lengthAdjust="spacingAndGlyphs">cnts/(cm**2-sr-sec-eV)</text>
</g>

<!-- table 1 -->
<g class="t10">
<text class="t10 e" x="108" y="230">2004/321</text><text class="t10 e" x="108" y="242">SZA (deg)</text><text class="t10 e" x="108" y="254">LT (hr)</text><text class="t10 e" x="108" y="266">Alt (km)</text><text class="t10 e" x="108" y="277">ELon (deg)</text>
<text class="t10 m" x="144" y="230">22:42</text><text class="t10 m" x="239" y="230">23:22</text><text class="t10 m" x="333" y="230">00:02</text><text class="t10 m" x="427" y="230">00:42</text><text class="t10 m" x="523" y="230">01:22</text><text class="t10 m" x="615" y="230">02:02</text>
<text class="t10 m" x="144" y="242">109.03</text><text class="t10 m" x="239" y="242">36.17</text><text class="t10 m" x="333" y="242">NO VAL</text><text class="t10 m" x="427" y="242">103.28</text><text class="t10 m" x="523" y="242">38.29</text><text class="t10 m" x="615" y="242">128.75</text>
<text class="t10 m" x="144" y="254">0.0e+00</text><text class="t10 m" x="239" y="254">0.0e+00</text><text class="t10 m" x="333" y="254">NO VAL</text><text class="t10 m" x="427" y="254">0.0e+00</text><text class="t10 m" x="523" y="254">0.0e+00</text><text class="t10 m" x="615" y="254">0.0e+00</text>
<text class="t10 m" x="144" y="266">356.89</text><text class="t10 m" x="239" y="266">413.48</text><text class="t10 m" x="333" y="266">NO VAL</text><text class="t10 m" x="427" y="266">358.34</text><text class="t10 m" x="523" y="266">417.06</text><text class="t10 m" x="615" y="266">398.68</text>
<text class="t10 m" x="144" y="277">92.90</text><text class="t10 m" x="239" y="277">57.23</text><text class="t10 m" x="333" y="277">NO VAL</text><text class="t10 m" x="427" y="277">51.89</text><text class="t10 m" x="523" y="277">27.41</text><text class="t10 m" x="615" y="277">201.45</text>
</g>
<!-- table 2 -->
<g>
<text class="t12 e" x="113" y="595">2004/321</text><text class="t12 e" x="113" y="608">SZA (deg)</text><text class="t12 e" x="113" y="622">SolLat (deg)</text><text class="t12 e" x="113" y="636">LT (hr)</text><text class="t12 e" x="113" y="650">PdLon (deg)</text>
<text class="t12 m" x="142" y="595">22:42</text><text class="t12 m" x="237" y="595">23:22</text><text class="t12 m" x="331" y="595">00:02</text><text class="t12 m" x="424" y="595">00:42</text><text class="t12 m" x="519" y="595">01:22</text><text class="t12 m" x="613" y="595">02:02</text>
<text class="t12 m" x="142" y="608">49.13</text><text class="t12 m" x="237" y="608">98.14</text><text class="t12 m" x="331" y="608">132.86</text><text class="t12 m" x="424" y="608">140.70</text><text class="t12 m" x="519" y="608">140.37</text><text class="t12 m" x="613" y="608">136.58</text>
<text class="t12 m" x="142" y="622">48.49</text><text class="t12 m" x="237" y="622">-59.35</text><text class="t12 m" x="331" y="622">-45.77</text><text class="t12 m" x="424" y="622">-27.43</text><text class="t12 m" x="519" y="622">-14.19</text><text class="t12 m" x="613" y="622">-3.07</text>
<text class="t12 m" x="142" y="636">12.61</text><text class="t12 m" x="237" y="636">19.08</text><text class="t12 m" x="331" y="636">0.85</text><text class="t12 m" x="424" y="636">1.95</text><text class="t12 m" x="519" y="636">2.49</text><text class="t12 m" x="613" y="636">2.89</text>
<text class="t12 m" x="142" y="650">67.00</text><text class="t12 m" x="237" y="650">72.98</text><text class="t12 m" x="331" y="650">228.59</text><text class="t12 m" x="424" y="650">222.40</text><text class="t12 m" x="519" y="650">213.92</text><text class="t12 m" x="613" y="650">205.00</text>
</g>
</svg>
</body></html>
